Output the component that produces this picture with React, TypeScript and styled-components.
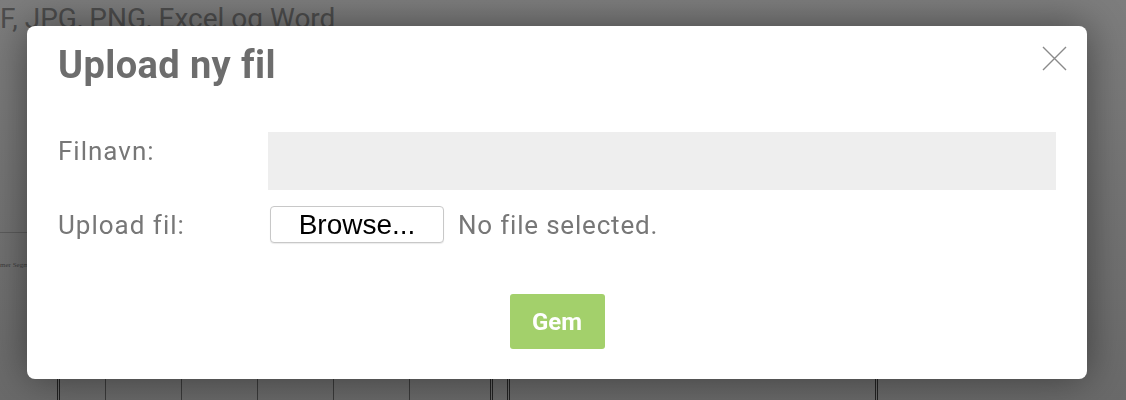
import React from "react";
import styled, { createGlobalStyle } from "styled-components";

const Global = createGlobalStyle`
  html, body { margin: 0; padding: 0; }
  body {
    width: 1126px;
    height: 400px;
    overflow: hidden;
    background: #7b7b7b;
    font-family: Roboto, "Liberation Sans", sans-serif;
  }
`;

const Backdrop = styled.div`
  width: 1126px;
  height: 400px;
  overflow: hidden;
  display: flex;
  flex-direction: column;
  background: linear-gradient(#7d7d7d, #6a6a6a);
`;

const BackHeading = styled.div`
  font-size: 28px;
  color: #4d4d4d;
  line-height: 34px;
  padding-top: 2px;
  white-space: nowrap;
`;

const DocArea = styled.div`
  flex: 1;
  display: flex;
  padding-top: 196px;
`;

const SidePanel = styled.div`
  width: 57px;
  border-top: 1px solid #5c5c5c;
  font-family: "Liberation Serif", serif;
  font-size: 7px;
  color: #3d3d3d;
  padding-top: 28px;
`;

const Page = styled.div<{ $w: number }>`
  width: ${(p) => p.$w}px;
  display: flex;
  border-left: 3px double #222;
  border-right: 3px double #222;
  margin-right: 14px;
`;

const Col = styled.div<{ $w: number }>`
  width: ${(p) => p.$w}px;
  border-right: 1px solid #3a3a3a;
`;

const Overlay = styled.div`
  position: fixed;
  inset: 0;
  display: flex;
  align-items: flex-start;
  padding: 26px 0 0 27px;
`;

const Modal = styled.div`
  width: 1060px;
  height: 353px;
  box-sizing: border-box;
  background: #fff;
  border-radius: 8px;
  box-shadow: 0 0 40px rgba(0, 0, 0, 0.45);
  padding: 14px 31px 0 31px;
  display: flex;
  flex-direction: column;
`;

const Header = styled.div`
  display: flex;
  align-items: flex-start;
  justify-content: space-between;
`;

const Title = styled.h2`
  margin: 0;
  font-size: 38px;
  letter-spacing: 0.4px;
  line-height: 50px;
  font-weight: 700;
  color: #6d6d6d;
`;

const Close = styled.button`
  border: 0;
  background: none;
  padding: 0;
  margin: 6px -11px 0 0;
  width: 25px;
  height: 25px;
  cursor: pointer;
  display: flex;
`;

const Form = styled.div`
  margin-top: 42px;
  display: grid;
  grid-template-columns: 210px 1fr;
  row-gap: 16px;
  align-items: start;
`;

const Label = styled.label`
  font-size: 26px;
  letter-spacing: 1px;
  color: #777;
  line-height: 36px;
  padding-top: 1px;
`;

const TextInput = styled.div`
  height: 58px;
  background: #eeeeee;
`;

const FileRow = styled.div`
  display: flex;
  align-items: center;
  gap: 14px;
  padding-left: 2px;
`;

const Browse = styled.button`
  height: 37px;
  width: 174px;
  box-sizing: border-box;
  background: #fff;
  border: 1px solid #c8c8c8;
  border-radius: 4px;
  box-shadow: 0 1px 1px rgba(0, 0, 0, 0.08);
  font-family: "Liberation Sans", Arial, sans-serif;
  font-size: 28px;
  color: #000;
  padding: 0;
`;

const NoFile = styled.span`
  font-size: 26px;
  letter-spacing: 0.8px;
  color: #777;
`;

const Footer = styled.div`
  display: flex;
  justify-content: center;
  margin-top: 51px;
`;

const Save = styled.button`
  width: 95px;
  height: 55px;
  border: 0;
  border-radius: 3px;
  background: #a3d06b;
  color: #fff;
  font-family: Roboto, sans-serif;
  font-weight: 700;
  font-size: 24px;
  padding: 0;
`;

export default function App() {
  return (
    <>
      <Global />
      <Backdrop>
        <BackHeading>F, JPG, PNG, Excel og Word</BackHeading>
        <DocArea>
          <SidePanel>mer Segme</SidePanel>
          <Page $w={430}>
            <Col $w={45} />
            <Col $w={75} />
            <Col $w={75} />
            <Col $w={75} />
            <Col $w={75} />
          </Page>
          <Page $w={365} />
        </DocArea>
      </Backdrop>
      <Overlay>
        <Modal role="dialog" aria-labelledby="t">
          <Header>
            <Title id="t">Upload ny fil</Title>
            <Close aria-label="Luk">
              <svg width="25" height="25" viewBox="0 0 25 25">
                <path d="M1 1 L24 24 M24 1 L1 24" stroke="#8a8a8a" strokeWidth="1.4" fill="none" />
              </svg>
            </Close>
          </Header>
          <Form>
            <Label>Filnavn:</Label>
            <TextInput />
            <Label>Upload fil:</Label>
            <FileRow>
              <Browse>Browse...</Browse>
              <NoFile>No file selected.</NoFile>
            </FileRow>
          </Form>
          <Footer>
            <Save>Gem</Save>
          </Footer>
        </Modal>
      </Overlay>
    </>
  );
}
